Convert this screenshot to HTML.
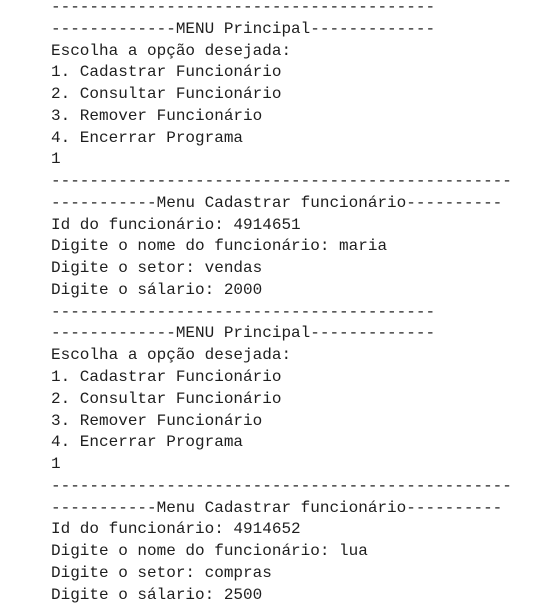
<!DOCTYPE html>
<html><head><meta charset="utf-8"><style>
html,body{margin:0;padding:0;background:#fff;width:555px;height:612px;overflow:hidden}
pre{position:absolute;left:51px;top:-3px;margin:0;font-family:"Liberation Mono",monospace;font-size:16px;line-height:21.77px;color:#1e1e1e}
</style></head><body><pre>----------------------------------------
-------------MENU Principal-------------
Escolha a opção desejada:
1. Cadastrar Funcionário
2. Consultar Funcionário
3. Remover Funcionário
4. Encerrar Programa
1
------------------------------------------------
-----------Menu Cadastrar funcionário----------
Id do funcionário: 4914651
Digite o nome do funcionário: maria
Digite o setor: vendas
Digite o sálario: 2000
----------------------------------------
-------------MENU Principal-------------
Escolha a opção desejada:
1. Cadastrar Funcionário
2. Consultar Funcionário
3. Remover Funcionário
4. Encerrar Programa
1
------------------------------------------------
-----------Menu Cadastrar funcionário----------
Id do funcionário: 4914652
Digite o nome do funcionário: lua
Digite o setor: compras
Digite o sálario: 2500</pre></body></html>
